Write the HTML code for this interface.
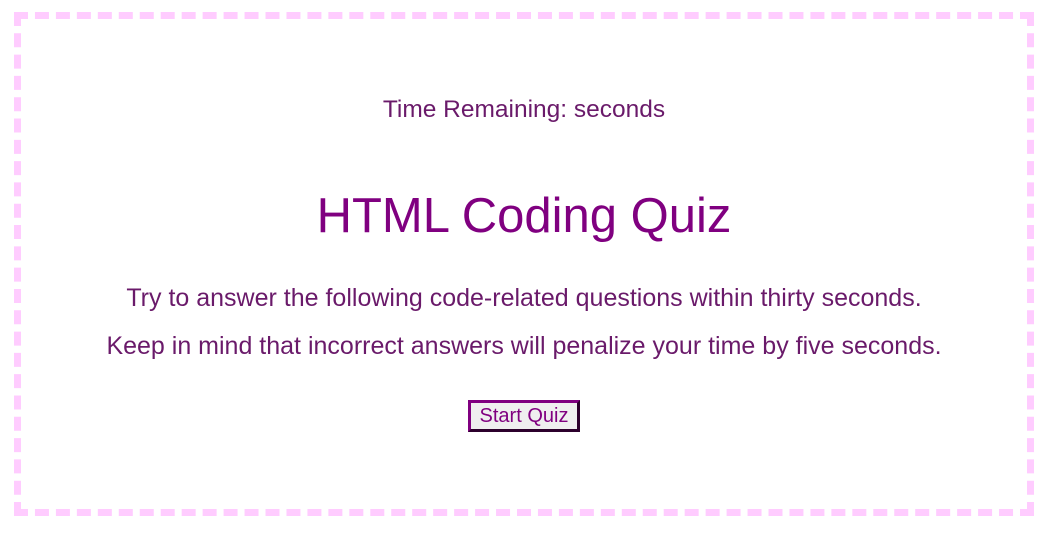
<html><head><style>
body{margin:0;background:#fff;font-family:"Liberation Sans",sans-serif;}
.box{position:absolute;left:14px;top:12px;width:1006px;height:490px;border:7px dashed #ffccff;text-align:center;color:#6a1a6a;}
.t{position:absolute;top:77px;width:100%;font-size:24.5px;}
h1{position:absolute;top:169px;width:100%;margin:0;font-size:49px;font-weight:normal;color:#800080;}
.p1{position:absolute;top:265px;width:100%;font-size:25px;}
.p2{position:absolute;top:313px;width:100%;font-size:25px;}
button{position:absolute;left:447px;top:381px;width:112px;height:32px;border:3px outset #800080;background:#efefef;color:#800080;font-family:"Liberation Sans",sans-serif;font-size:20px;padding:0;}
</style></head><body>
<div class="box">
<div class="t">Time Remaining: seconds</div>
<h1>HTML Coding Quiz</h1>
<div class="p1">Try to answer the following code-related questions within thirty seconds.</div>
<div class="p2">Keep in mind that incorrect answers will penalize your time by five seconds.</div>
<button>Start Quiz</button>
</div>
</body></html>
